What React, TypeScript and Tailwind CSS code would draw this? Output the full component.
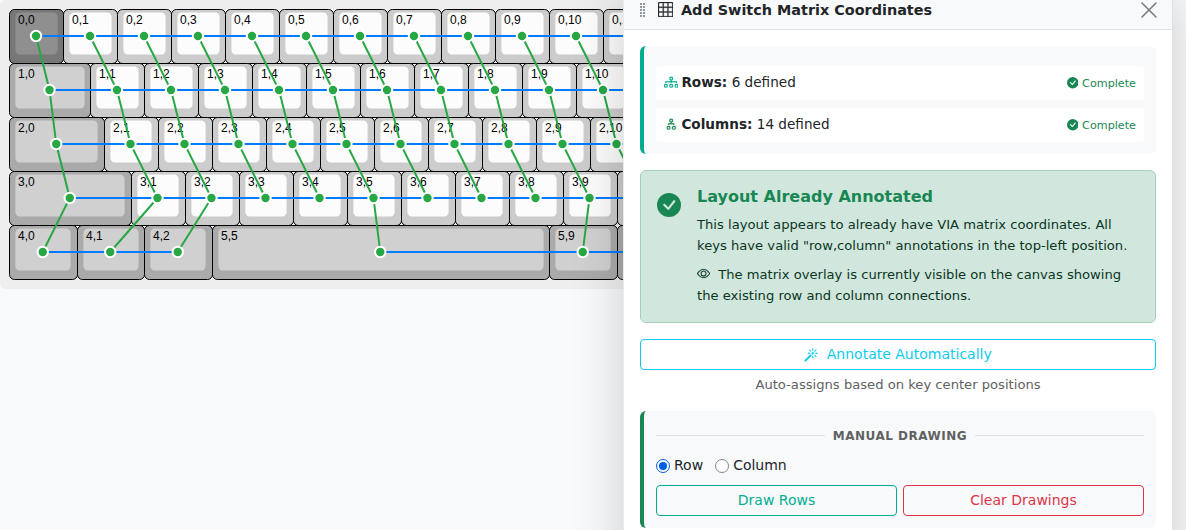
import React from "react";
import {
  BsDiagram3,
  BsDiagram2,
  BsCheckCircleFill,
  BsMagic,
  BsEye,
  BsGripVertical,
  BsGrid3X3,
} from "react-icons/bs";

type Kind = "esc" | "alpha" | "mod";
interface Key {
  label: string;
  x: number;
  w: number;
  row: number;
  kind: Kind;
}

const U = 54;
const ORIGIN = 9;
const LABEL_LIMIT = 614;

const row = (index: number, first: number, kind: Kind, count: number): Key[] => {
  const keys: Key[] = [{ label: `${index},0`, x: 0, w: first, row: index, kind }];
  for (let i = 1; i <= count; i++) {
    keys.push({ label: `${index},${i}`, x: first + i - 1, w: 1, row: index, kind: "alpha" });
  }
  return keys;
};

const KEYS: Key[] = [
  ...row(0, 1, "esc", 12),
  ...row(1, 1.5, "mod", 12),
  ...row(2, 1.75, "mod", 11),
  ...row(3, 2.25, "mod", 10),
  { label: "4,0", x: 0, w: 1.25, row: 4, kind: "mod" },
  { label: "4,1", x: 1.25, w: 1.25, row: 4, kind: "mod" },
  { label: "4,2", x: 2.5, w: 1.25, row: 4, kind: "mod" },
  { label: "5,5", x: 3.75, w: 6.25, row: 4, kind: "mod" },
  { label: "5,9", x: 10, w: 1.25, row: 4, kind: "mod" },
  { label: "5,10", x: 11.25, w: 1.25, row: 4, kind: "mod" },
];

const COLORS: Record<Kind, { side: string; cap: string }> = {
  esc: { side: "#777777", cap: "#8f8f8f" },
  alpha: { side: "#cccccc", cap: "#fcfcfc" },
  mod: { side: "#aaaaaa", cap: "#d0d0d0" },
};

const cx = (k: Key) => ORIGIN + (k.x + k.w / 2) * U;
const cy = (k: Key) => ORIGIN + (k.row + 0.5) * U;
const points = (keys: Key[]) => keys.map((k) => `${cx(k)},${cy(k)}`).join(" ");
const part = (k: Key, i: number) => Number(k.label.split(",")[i]);

const ROWS = [0, 1, 2, 3, 4, 5].map((r) => KEYS.filter((k) => part(k, 0) === r));
const COLUMNS = Array.from({ length: 13 }, (_, c) => KEYS.filter((k) => part(k, 1) === c));

function Keyboard() {
  return (
    <svg width="800" height="289" className="block shrink-0">
      <rect width="800" height="289" rx="6" fill="#eeeeee" />
      {KEYS.map((k) => {
        const left = Math.round(ORIGIN + k.x * U);
        const right = Math.round(ORIGIN + (k.x + k.w) * U);
        const capRight = Math.floor(ORIGIN + (k.x + k.w) * U - 5);
        const top = ORIGIN + k.row * U;
        const c = COLORS[k.kind];
        return (
          <g key={k.label}>
            <rect x={left + 0.5} y={top + 0.5} width={right - left} height={U} rx="5" fill={c.side} stroke="#000" />
            <rect x={left + 6.4} y={top + 3.4} width={capRight - left - 6.8} height="42.2" rx="4.5" fill={c.cap} />
            {left < LABEL_LIMIT && (
              <text x={left + 9} y={top + 15} fontSize="12" fontFamily="Liberation Sans, Arial, sans-serif" fill="#000">
                {k.label}
              </text>
            )}
          </g>
        );
      })}
      {ROWS.map((r, i) => (
        <polyline key={i} points={points(r)} fill="none" stroke="#007bff" strokeWidth="2" />
      ))}
      {COLUMNS.map((c, i) => (
        <polyline key={i} points={points(c)} fill="none" stroke="#28a745" strokeWidth="2" />
      ))}
      {KEYS.map((k) => (
        <circle key={k.label} cx={cx(k)} cy={cy(k)} r="5.2" fill="#28a745" stroke="#fff" strokeWidth="2" />
      ))}
    </svg>
  );
}

function StatusRow({ icon, name, value }: { icon: React.ReactNode; name: string; value: string }) {
  return (
    <div className="flex h-[34px] items-center rounded bg-white px-2">
      {icon}
      <span className="relative bottom-px ml-[3px] text-[13.6px] leading-[22px]">
        <b>{name}</b> {value}
      </span>
      <span className="ml-auto flex items-center text-[11.2px] text-[#198754]">
        <BsCheckCircleFill className="mr-1 size-[11.5px]" />
        <span className="relative top-px">Complete</span>
      </span>
    </div>
  );
}

export default function App() {
  return (
    <div className="relative h-[530px] w-[1186px] overflow-hidden bg-[#f8f9fa] font-['DejaVu_Sans',sans-serif] text-[#212529]">
      <Keyboard />
      <div className="absolute left-[623px] top-[-20px] h-[600px] w-[550px] border-x border-l-[#e9eaec] border-r-[#dee0e2] bg-white shadow-[0_16px_48px_rgba(0,0,0,0.175)]">
        <header className="flex h-[50px] items-center border-b border-[#dee2e6] bg-[#f8f9fa] pt-[10px] pr-[15.5px] pl-[11px]">
          <BsGripVertical className="size-4 text-[#6c757d]" />
          <BsGrid3X3 strokeWidth="0.3" className="ml-[7px] size-[15.2px] text-[#212529]" />
          <h1 className="relative top-px ml-[7.8px] text-[14.4px] font-bold">Add Switch Matrix Coordinates</h1>
          <svg viewBox="0 0 16 16" className="ml-auto size-4 text-[#7c7d7e]" stroke="currentColor" strokeWidth="1.6" strokeLinecap="round">
            <path d="M1 1 15 15M15 1 1 15" />
          </svg>
        </header>
        <div className="px-4 pt-4">
          <section className="flex h-[108px] flex-col gap-2 rounded-md border-l-4 border-[#00ad92] bg-[#f8f9fa] px-3 pt-5">
            <StatusRow icon={<BsDiagram3 strokeWidth="0.3" className="relative bottom-[0.5px] size-[14.4px] text-[#00ad92]" />} name="Rows:" value="6 defined" />
            <StatusRow icon={<BsDiagram2 strokeWidth="0.3" className="relative right-[0.5px] bottom-[0.5px] size-[14.4px] text-[#198754]" />} name="Columns:" value="14 defined" />
          </section>
          <section className="mt-4 flex h-[153px] rounded-md border border-[#a3cfbb] bg-[#d1e7dd] pl-4 text-[#0a3622]">
            <BsCheckCircleFill className="mt-[22px] size-6 text-[#198754]" />
            <div className="ml-4 pt-4">
              <h2 className="text-[16px] leading-[20px] font-bold text-[#198754]">Layout Already Annotated</h2>
              <p className="mt-[7px] text-[13.14px] leading-[21px] whitespace-nowrap">
                This layout appears to already have VIA matrix coordinates. All
                <br />
                keys have valid "row,column" annotations in the top-left position.
              </p>
              <p className="mt-2 text-[13.14px] leading-[21px] whitespace-nowrap">
                <BsEye strokeWidth="0.2" className="mr-2 inline size-[13.14px] align-[-1.2px]" />
                The matrix overlay is currently visible on the canvas showing
                <br />
                the existing row and column connections.
              </p>
            </div>
          </section>
          <button className="mt-4 flex h-[31px] w-full items-center justify-center rounded border border-[#0dcaf0] text-[14px] text-[#0dcaf0]">
            <BsMagic strokeWidth="0.3" className="mr-[8.5px] size-[14px]" />
            Annotate Automatically
          </button>
          <p className="mt-1 text-center text-[13.14px] leading-[21px] text-[#5f6163]">Auto-assigns based on key center positions</p>
          <section className="mt-4 h-[117px] rounded-md border-l-4 border-[#198754] bg-[#f8f9fa] px-3 pt-4">
            <div className="flex h-[18px] items-center gap-2 text-[12px] font-bold tracking-[0.5px] text-[#5f6163]">
              <span className="mb-[2px] h-px flex-1 bg-[#dee2e6]" />
              MANUAL DRAWING
              <span className="mb-[2px] h-px flex-1 bg-[#dee2e6]" />
            </div>
            <div className="mt-[10px] flex h-[21px] items-center text-[14px]">
              <span className="flex size-[14px] items-center justify-center rounded-full border border-[#005fe5] bg-white">
                <span className="size-2 rounded-full bg-[#005fe5]" />
              </span>
              <span className="ml-1">Row</span>
              <span className="ml-3 size-[14px] rounded-full border border-[#85858f] bg-white" />
              <span className="ml-1">Column</span>
            </div>
            <div className="mt-[9px] flex gap-[6px]">
              <button className="h-[31px] flex-1 rounded border border-[#00ad92] text-[14px] text-[#00ad92]">Draw Rows</button>
              <button className="h-[31px] flex-1 rounded border border-[#dc3545] text-[14px] text-[#dc3545]">Clear Drawings</button>
            </div>
          </section>
        </div>
      </div>
    </div>
  );
}
